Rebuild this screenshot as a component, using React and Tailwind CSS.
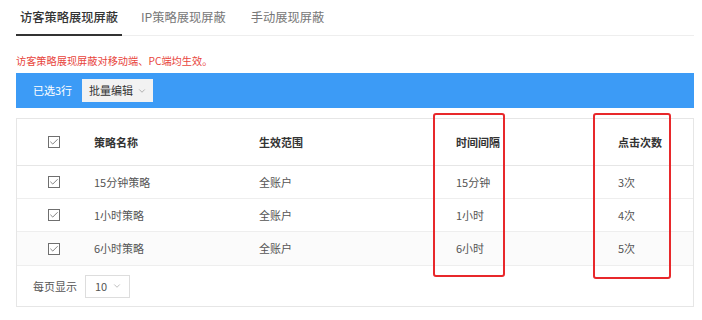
import { Check, ChevronDown } from "lucide-react";

/* ───── table data ───── */
const rows = [
  { name: "15分钟策略", scope: "全账户", interval: "15分钟", clicks: "3次" },
  { name: "1小时策略", scope: "全账户", interval: "1小时", clicks: "4次" },
  { name: "6小时策略", scope: "全账户", interval: "6小时", clicks: "5次" },
];

const grid = "grid grid-cols-[77px_165px_197px_162px_1fr] items-center";

function Box() {
  return (
    <span className="ml-[31px] flex h-[12px] w-[12px] items-center justify-center border border-[#6f6f6f] bg-white">
      <Check className="h-[10px] w-[10px] text-[#444]" strokeWidth={1.6} />
    </span>
  );
}

export default function App() {
  return (
    <div
      className="relative h-[320px] w-[702px] overflow-hidden bg-white text-[#444]"
      style={{ fontFamily: '"Noto Sans CJK SC", "Microsoft YaHei", sans-serif' }}
    >
      <div className="w-[678px] ml-[16px]">
        {/* ── tabs ── */}
        <div className="flex h-[36px] items-end border-b border-[#eeeeee] text-[12.25px]">
          <div className="h-full flex items-center px-[4px] border-b-2 border-[#333] text-[#333] font-medium -mb-px">
            访客策略展现屏蔽
          </div>
          <div className="h-full flex items-center ml-[19px] text-[#777]">IP策略展现屏蔽</div>
          <div className="h-full flex items-center ml-[25px] text-[#777]">手动展现屏蔽</div>
        </div>

        {/* ── notice ── */}
        <div className="mt-[18px] h-[14px] flex items-center text-[10.2px] text-[#e8453c]">
          访客策略展现屏蔽对移动端、PC端均生效。
        </div>

        {/* ── selection bar ── */}
        <div className="mt-[5px] flex h-[35px] items-center bg-[#3c9bf6] pl-[17px] text-[11px]">
          <span className="text-white">已选3行</span>
          <button className="ml-[10px] flex h-[23px] items-center gap-[4px] bg-[#f2f2f2] pl-[7px] pr-[6px] text-[#333]">
            批量编辑
            <ChevronDown className="h-[10px] w-[10px] text-[#888]" strokeWidth={1.5} />
          </button>
        </div>

        {/* ── table card ── */}
        <div className="mt-[10px] border border-[#e6e6e6] text-[11px]">
          <div className={`${grid} h-[47px] border-b border-[#e6e6e6] font-semibold text-[#333]`}>
            <Box />
            <span>策略名称</span>
            <span>生效范围</span>
            <span>时间间隔</span>
            <span>点击次数</span>
          </div>
          {rows.map((r, i) => (
            <div
              key={r.name}
              className={`${grid} h-[33px] text-[#555] ${i < 2 ? "border-b border-[#eeeeee]" : "bg-[#fbfbfb]"}`}
            >
              <Box />
              <span>{r.name}</span>
              <span>{r.scope}</span>
              <span>{r.interval}</span>
              <span>{r.clicks}</span>
            </div>
          ))}
          <div className="flex h-[41px] items-center pl-[16px] border-t border-[#eeeeee] text-[#555]">
            <span>每页显示</span>
            <div className="ml-[8px] flex h-[23px] w-[45px] items-center gap-[5px] border border-[#dddddd] pl-[9px]">
              10
              <ChevronDown className="h-[10px] w-[10px] text-[#999]" strokeWidth={1.5} />
            </div>
          </div>
        </div>
      </div>

      {/* ── red annotation boxes ── */}
      <div className="absolute left-[433px] top-[113px] h-[164px] w-[72px] rounded-[3px] border-2 border-[#e8282b]" />
      <div className="absolute left-[593px] top-[113px] h-[166px] w-[78px] rounded-[3px] border-2 border-[#e8282b]" />
    </div>
  );
}
